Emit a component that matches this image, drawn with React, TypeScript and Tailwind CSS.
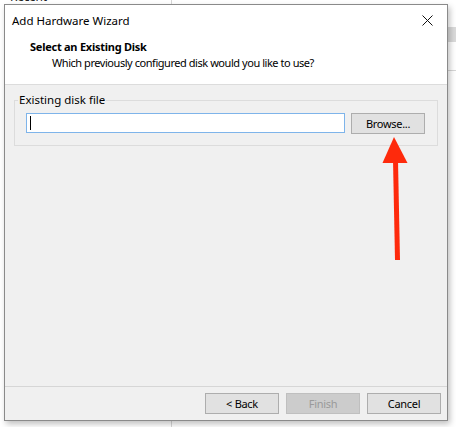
import React from 'react';

const font = { fontFamily: '"Noto Sans", "Open Sans", sans-serif' };

export default function App() {
  return (
    <div
      className="relative h-[427px] w-[456px] overflow-hidden bg-white text-[11px] tracking-[-0.3px] text-black"
      style={font}
    >
      {/* App window behind the dialog */}
      <div className="absolute left-[10px] top-[-11px] text-[12px] leading-4 text-[#222]">Recent</div>
      <div className="absolute left-[171px] top-0 h-full w-px bg-[#d6d6d6]" />
      <div className="absolute left-[440px] top-[27px] h-[15px] w-[20px] bg-[#dadada]" />
      <div className="absolute left-[440px] top-[70px] h-px w-[20px] bg-[#d6d6d6]" />

      {/* Dialog */}
      <div className="absolute left-[4px] top-[4px] flex h-[417px] w-[444px] flex-col border border-[#8a8a8a] bg-[#f0f0f0] shadow-[2px_3px_6px_rgba(0,0,0,0.25)]">
        {/* Title bar */}
        <div className="flex h-[30px] items-center justify-between bg-white pl-[7px] pr-[12px] pt-px">
          <span className="text-[11.5px] leading-4 tracking-normal">Add Hardware Wizard</span>
          <svg width="11" height="11" viewBox="0 0 11 11" className="mr-[2px]">
            <path d="M0.5 0.5 L10.5 10.5 M10.5 0.5 L0.5 10.5" stroke="#111" strokeWidth="1" />
          </svg>
        </div>

        {/* Header */}
        <div className="flex h-[50px] flex-col border-b border-[#dcdcdc] bg-white pl-[25px] pt-[4px]">
          <span className="font-bold leading-4 tracking-[-0.25px]">Select an Existing Disk</span>
          <span className="pl-[22px] leading-4 tracking-[-0.45px]">
            Which previously configured disk would you like to use?
          </span>
        </div>

        {/* Body */}
        <div className="flex-1 px-[9px] pt-[7px]">
          <fieldset className="border border-[#dcdcdc] pb-[11px] pl-[11px] pr-[12px] pt-[5px]">
            <legend className="ml-[-8px] px-px text-[11.5px] leading-4 tracking-normal">Existing disk file</legend>
            <div className="flex gap-[6px]">
              <div className="flex h-[20px] flex-1 items-center border border-[#7eb4ea] bg-white pl-[3px]">
                <div className="h-[14px] w-px bg-black" />
              </div>
              <button className="h-[21px] w-[74px] border border-[#adadad] bg-[#e1e1e1] leading-4">
                Browse...
              </button>
            </div>
          </fieldset>
        </div>

        {/* Footer */}
        <div className="flex h-[34px] justify-end gap-[7px] border-t border-[#d6d6d6] pr-[6px] pt-[6px]">
          <button className="h-[21px] w-[74px] border border-[#adadad] bg-[#e1e1e1] leading-4">
            &lt; Back
          </button>
          <button className="h-[21px] w-[74px] border border-[#bfbfbf] bg-[#cccccc] leading-4 text-[#9a9a9a]">
            Finish
          </button>
          <button className="h-[21px] w-[74px] border border-[#adadad] bg-[#e1e1e1] leading-4">
            Cancel
          </button>
        </div>
      </div>

      {/* Red annotation arrow */}
      <svg className="absolute left-0 top-0" width="456" height="427" viewBox="0 0 456 427">
        <path d="M395.5 160 L397.5 260" stroke="#fe2a0c" strokeWidth="5" />
        <path d="M394 137 L407.5 163 L382.5 163 Z" fill="#fe2a0c" />
      </svg>
    </div>
  );
}
